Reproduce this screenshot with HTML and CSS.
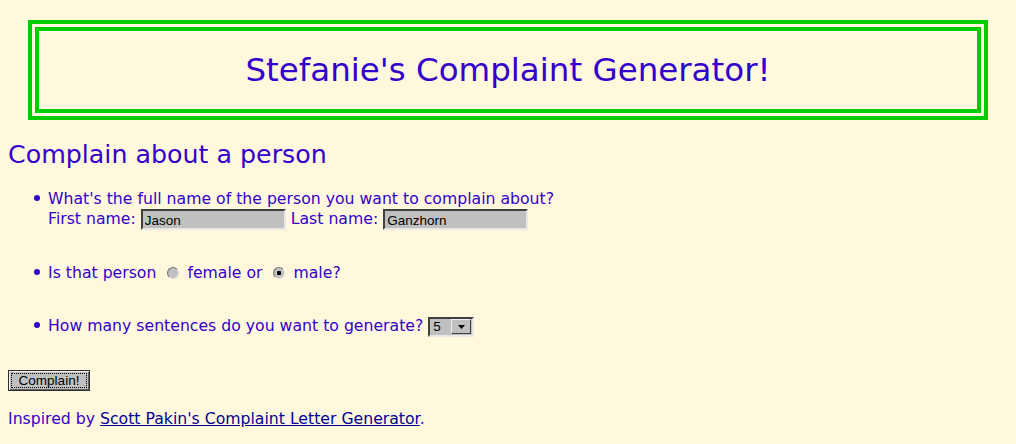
FILE: index.html
```html
<!DOCTYPE html>
<html>
<head>
<meta charset="utf-8">
<title>Stefanie's Complaint Generator!</title>
<link rel="stylesheet" href="styles.css">
</head>
<body>
<div class="banner"><h1 class="title">Stefanie's Complaint Generator!</h1></div>
<h2 class="subtitle">Complain about a person</h2>
<form class="form">
  <ul class="questions">
    <li class="q q-name">What's the full name of the person you want to complain about?<br>
      First name: <input class="field" type="text" value="Jason"> Last name: <input class="field" type="text" value="Ganzhorn"></li>
    <li class="q q-gender">Is that person <input class="radio" type="radio" name="g"> female or <input class="radio" type="radio" name="g" checked> male?</li>
    <li class="q q-count">How many sentences do you want to generate? <span class="select"><span class="select-value">5</span><span class="select-arrow"><svg width="7" height="4" viewBox="0 0 7 4"><path d="M0 0H7L3.5 4Z" fill="#000"/></svg></span></span></li>
  </ul>
  <button class="btn" type="button"><span class="btn-label">Complain!</span></button>
</form>
<p class="credit">Inspired by <a class="credit-link" href="#">Scott Pakin's Complaint Letter Generator</a>.</p>
</body>
</html>
```
FILE: styles.css
```css
html, body {
  background: #fff8dc;
}
body {
  margin: 8px;
  color: #3300cc;
  font-family: "DejaVu Sans", sans-serif;
  font-size: 15.7px;
}
.banner {
  margin: 12px 20px 0;
  border: 11px double #00cc00;
  height: 78px;
  display: flex;
  align-items: center;
  justify-content: center;
}
.title {
  margin: 0;
  font-size: 32.5px;
  font-weight: normal;
}
.subtitle {
  margin: 20px 0 0;
  font-size: 25.3px;
  font-weight: normal;
}
.form {
  margin: 0;
}
.questions {
  margin: 20px 0 0;
  padding-left: 40px;
  list-style: none;
  display: flex;
  flex-direction: column;
  gap: 33px;
}
.q {
  line-height: 20px;
}
.q::before {
  content: "";
  display: inline-block;
  width: 6px;
  height: 6px;
  border-radius: 50%;
  background: currentColor;
  margin-left: -14px;
  margin-right: 8px;
  vertical-align: 3px;
}
.field {
  width: 145px;
  height: 21px;
  box-sizing: border-box;
  background: #c0c0c0;
  border: 2px solid;
  border-color: #404040 #e8e8e8 #e8e8e8 #404040;
  font-family: "Liberation Sans", Arial, sans-serif;
  font-size: 13.5px;
  color: #000;
  padding: 1px 2px 0;
  margin: 0;
  vertical-align: middle;
}
.radio {
  appearance: none;
  width: 12px;
  height: 12px;
  box-sizing: border-box;
  margin: 0 3px 0 6px;
  border-radius: 50%;
  background: #c0c0c0;
  border: 1px solid;
  border-color: #707070 #e0e0e0 #e0e0e0 #707070;
  vertical-align: -1px;
}
.radio:checked {
  background: radial-gradient(circle, #000 0 2px, #c0c0c0 2.5px);
}
.select {
  display: inline-flex;
  align-items: center;
  width: 46px;
  height: 20px;
  box-sizing: border-box;
  border: 2px solid;
  border-color: #404040 #e8e8e8 #e8e8e8 #404040;
  background: #c0c0c0;
  vertical-align: middle;
  color: #000;
  font-family: "Liberation Sans", Arial, sans-serif;
  font-size: 13.5px;
}
.select-value {
  flex: 1;
  padding-left: 3px;
}
.select-arrow {
  width: 20px;
  height: 15px;
  box-sizing: border-box;
  margin-right: 1px;
  display: flex;
  align-items: center;
  justify-content: center;
  background: #c0c0c0;
  border: 1px solid;
  border-color: #f0f0f0 #404040 #404040 #f0f0f0;
}
.btn {
  margin: 33px 0 0;
  width: 82px;
  height: 21px;
  padding: 2px;
  box-sizing: border-box;
  background: #c0c0c0;
  border: 1px solid #303030;
  box-shadow: inset 1px 1px #f0f0f0, inset -1px -1px #606060;
  font-family: "Liberation Sans", Arial, sans-serif;
  font-size: 13.5px;
  color: #000;
  display: block;
}
.btn-label {
  display: block;
  border: 1px dotted #000;
  line-height: 13px;
}
.credit {
  margin: 18px 0 0;
}
.credit-link {
  color: #000099;
}
```
